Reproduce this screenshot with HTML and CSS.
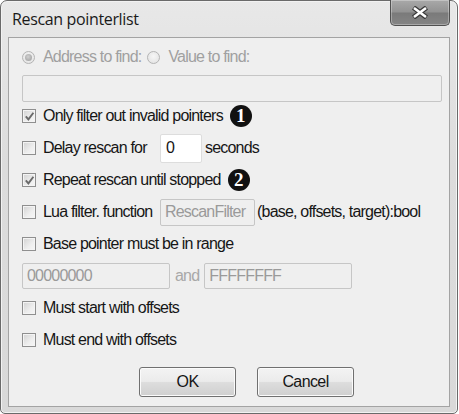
FILE: index.html
```html
<!DOCTYPE html>
<html>
<head>
<meta charset="utf-8">
<link rel="stylesheet" href="styles.css">
</head>
<body>
<div class="window">
  <div class="titlebar">
    <span class="title">Rescan pointerlist</span>
    <div class="close">
      <svg width="18" height="13" viewBox="0 0 18 13"><path d="M2.5 1.5 L15.5 11.5 M15.5 1.5 L2.5 11.5" stroke="#3a3a3a" stroke-width="5" fill="none"/><path d="M3 2 L15 11 M15 2 L3 11" stroke="#ffffff" stroke-width="2.6" fill="none"/></svg>
    </div>
  </div>
  <div class="client">
    <div class="radio-row">
      <span class="radio checked"></span>
      <span class="label disabled">Address to find:</span>
      <span class="radio second"></span>
      <span class="label disabled">Value to find:</span>
    </div>
    <div class="field"></div>
    <div class="rows">
      <div class="row">
        <span class="cb"><svg width="11" height="11" viewBox="0 0 11 11"><path d="M1.8 5.4 L4.4 8.4 L9.4 1.8" stroke="#6a6a6a" stroke-width="1.9" fill="none"/></svg></span>
        <span class="label">Only filter out invalid pointers</span>
        <span class="badge">1</span>
      </div>
      <div class="row">
        <span class="cb"></span>
        <span class="label col">Delay rescan for</span>
        <span class="input white">0</span>
        <span class="label after">seconds</span>
      </div>
      <div class="row">
        <span class="cb"><svg width="11" height="11" viewBox="0 0 11 11"><path d="M1.8 5.4 L4.4 8.4 L9.4 1.8" stroke="#6a6a6a" stroke-width="1.9" fill="none"/></svg></span>
        <span class="label">Repeat rescan until stopped</span>
        <span class="badge">2</span>
      </div>
      <div class="row">
        <span class="cb"></span>
        <span class="label col">Lua filter. function</span>
        <span class="input gray lua">RescanFilter</span>
        <span class="label tight">(base, offsets, target):bool</span>
      </div>
      <div class="row">
        <span class="cb"></span>
        <span class="label">Base pointer must be in range</span>
      </div>
      <div class="row range">
        <span class="input gray wide">00000000</span>
        <span class="label and">and</span>
        <span class="input gray wide">FFFFFFFF</span>
      </div>
      <div class="row">
        <span class="cb"></span>
        <span class="label">Must start with offsets</span>
      </div>
      <div class="row">
        <span class="cb"></span>
        <span class="label">Must end with offsets</span>
      </div>
    </div>
    <div class="buttons">
      <button class="btn">OK</button>
      <button class="btn">Cancel</button>
    </div>
  </div>
</div>
</body>
</html>
```
FILE: styles.css
```css
html, body {
  margin: 0;
  padding: 0;
  background: #ffffff;
}
.window {
  box-sizing: border-box;
  width: 458px;
  height: 414px;
  border: 1px solid #6a6a6a;
  border-radius: 7px 7px 5px 5px;
  background: linear-gradient(#e8e8e8, #dcdcdc 40%, #d9d9d9);
  box-shadow: inset 0 0 0 1px #f2f2f2;
  padding: 0 7px 6px 7px;
  display: flex;
  flex-direction: column;
  font-family: "Liberation Sans", Arial, sans-serif;
}
.titlebar {
  height: 36px;
  flex: none;
  display: flex;
  justify-content: space-between;
  align-items: flex-start;
}
.title {
  font-family: "Open Sans", sans-serif;
  font-size: 16px;
  letter-spacing: -0.35px;
  line-height: 37px;
  color: #1a1a1a;
  padding-left: 4px;
}
.close {
  box-sizing: border-box;
  width: 60px;
  height: 26px;
  margin-top: -1px;
  border: 1px solid #505050;
  border-top: none;
  border-radius: 0 0 5px 5px;
  background: linear-gradient(#a9a9a9, #929292 48%, #7a7a7a 52%, #858585);
  box-shadow: inset 0 0 0 1px rgba(255,255,255,0.3);
  display: flex;
  align-items: center;
  justify-content: center;
}
.client {
  box-sizing: border-box;
  flex: 1;
  border: 1px solid #a3a3a3;
  background: #efefef;
  padding: 9px 7px 0 13px;
  font-size: 16px;
  letter-spacing: -0.8px;
  color: #161616;
}
.radio-row {
  height: 20px;
  display: flex;
  align-items: center;
}
.radio {
  box-sizing: border-box;
  width: 13px;
  height: 13px;
  border-radius: 50%;
  border: 1px solid #b4b4b4;
  background: radial-gradient(circle at 50% 40%, #f6f6f6, #e0e0e0);
  margin-right: 8px;
  position: relative;
  flex: none;
}
.radio.checked::after {
  content: "";
  position: absolute;
  left: 2px;
  top: 2px;
  width: 7px;
  height: 7px;
  border-radius: 50%;
  background: radial-gradient(circle at 45% 40%, #d0d0d0, #9a9a9a);
}
.radio.second {
  margin-left: 6px;
}
.label {
  white-space: nowrap;
  line-height: 20px;
}
.disabled {
  color: #a0a0a0;
}
.field {
  box-sizing: border-box;
  height: 27px;
  margin-top: 8px;
  border: 1px solid #c6c6c6;
  border-radius: 2px;
  background: #efefef;
}
.rows {
  margin-top: -2px;
}
.row {
  height: 32px;
  display: flex;
  align-items: center;
}
.cb {
  box-sizing: border-box;
  width: 14px;
  height: 14px;
  border: 1px solid #8f8f8f;
  background: linear-gradient(135deg, #d2d2d2, #eeeeee 60%, #f6f6f6);
  box-shadow: inset 0 0 0 1px #f4f4f4;
  margin-right: 7px;
  flex: none;
  display: flex;
  align-items: center;
  justify-content: center;
}
.badge {
  width: 22px;
  height: 22px;
  border-radius: 50%;
  background: #111111;
  color: #ffffff;
  font-family: "Liberation Serif", serif;
  font-weight: bold;
  font-size: 19px;
  letter-spacing: 0;
  display: flex;
  align-items: center;
  justify-content: center;
  margin-left: 7px;
}
.col {
  width: 117px;
}
.input {
  box-sizing: border-box;
  display: flex;
  align-items: center;
  padding-left: 4px;
  border-radius: 2px;
  white-space: nowrap;
}
.white {
  width: 42px;
  height: 29px;
  background: #ffffff;
  border: 1px solid #dddddd;
  padding-left: 5px;
}
.gray {
  height: 27px;
  background: #efefef;
  border: 1px solid #c6c6c6;
  color: #9a9a9a;
}
.lua {
  width: 95px;
}
.after {
  margin-left: 3px;
}
.tight {
  margin-left: 2px;
}
.wide {
  width: 148px;
  height: 26px;
}
.and {
  color: #a8a8a8;
  margin: 0 5px;
}
.buttons {
  margin-top: 11px;
  padding-left: 117px;
  display: flex;
  gap: 21px;
}
.btn {
  box-sizing: border-box;
  width: 97px;
  height: 30px;
  border: 1px solid #707070;
  border-radius: 3px;
  background: linear-gradient(#f3f3f3, #ebebeb 48%, #dddddd 52%, #cfcfcf);
  box-shadow: inset 0 0 0 1px #fbfbfb;
  font-family: "Liberation Sans", Arial, sans-serif;
  font-size: 16px;
  letter-spacing: -0.6px;
  color: #161616;
  padding: 0;
}
```
